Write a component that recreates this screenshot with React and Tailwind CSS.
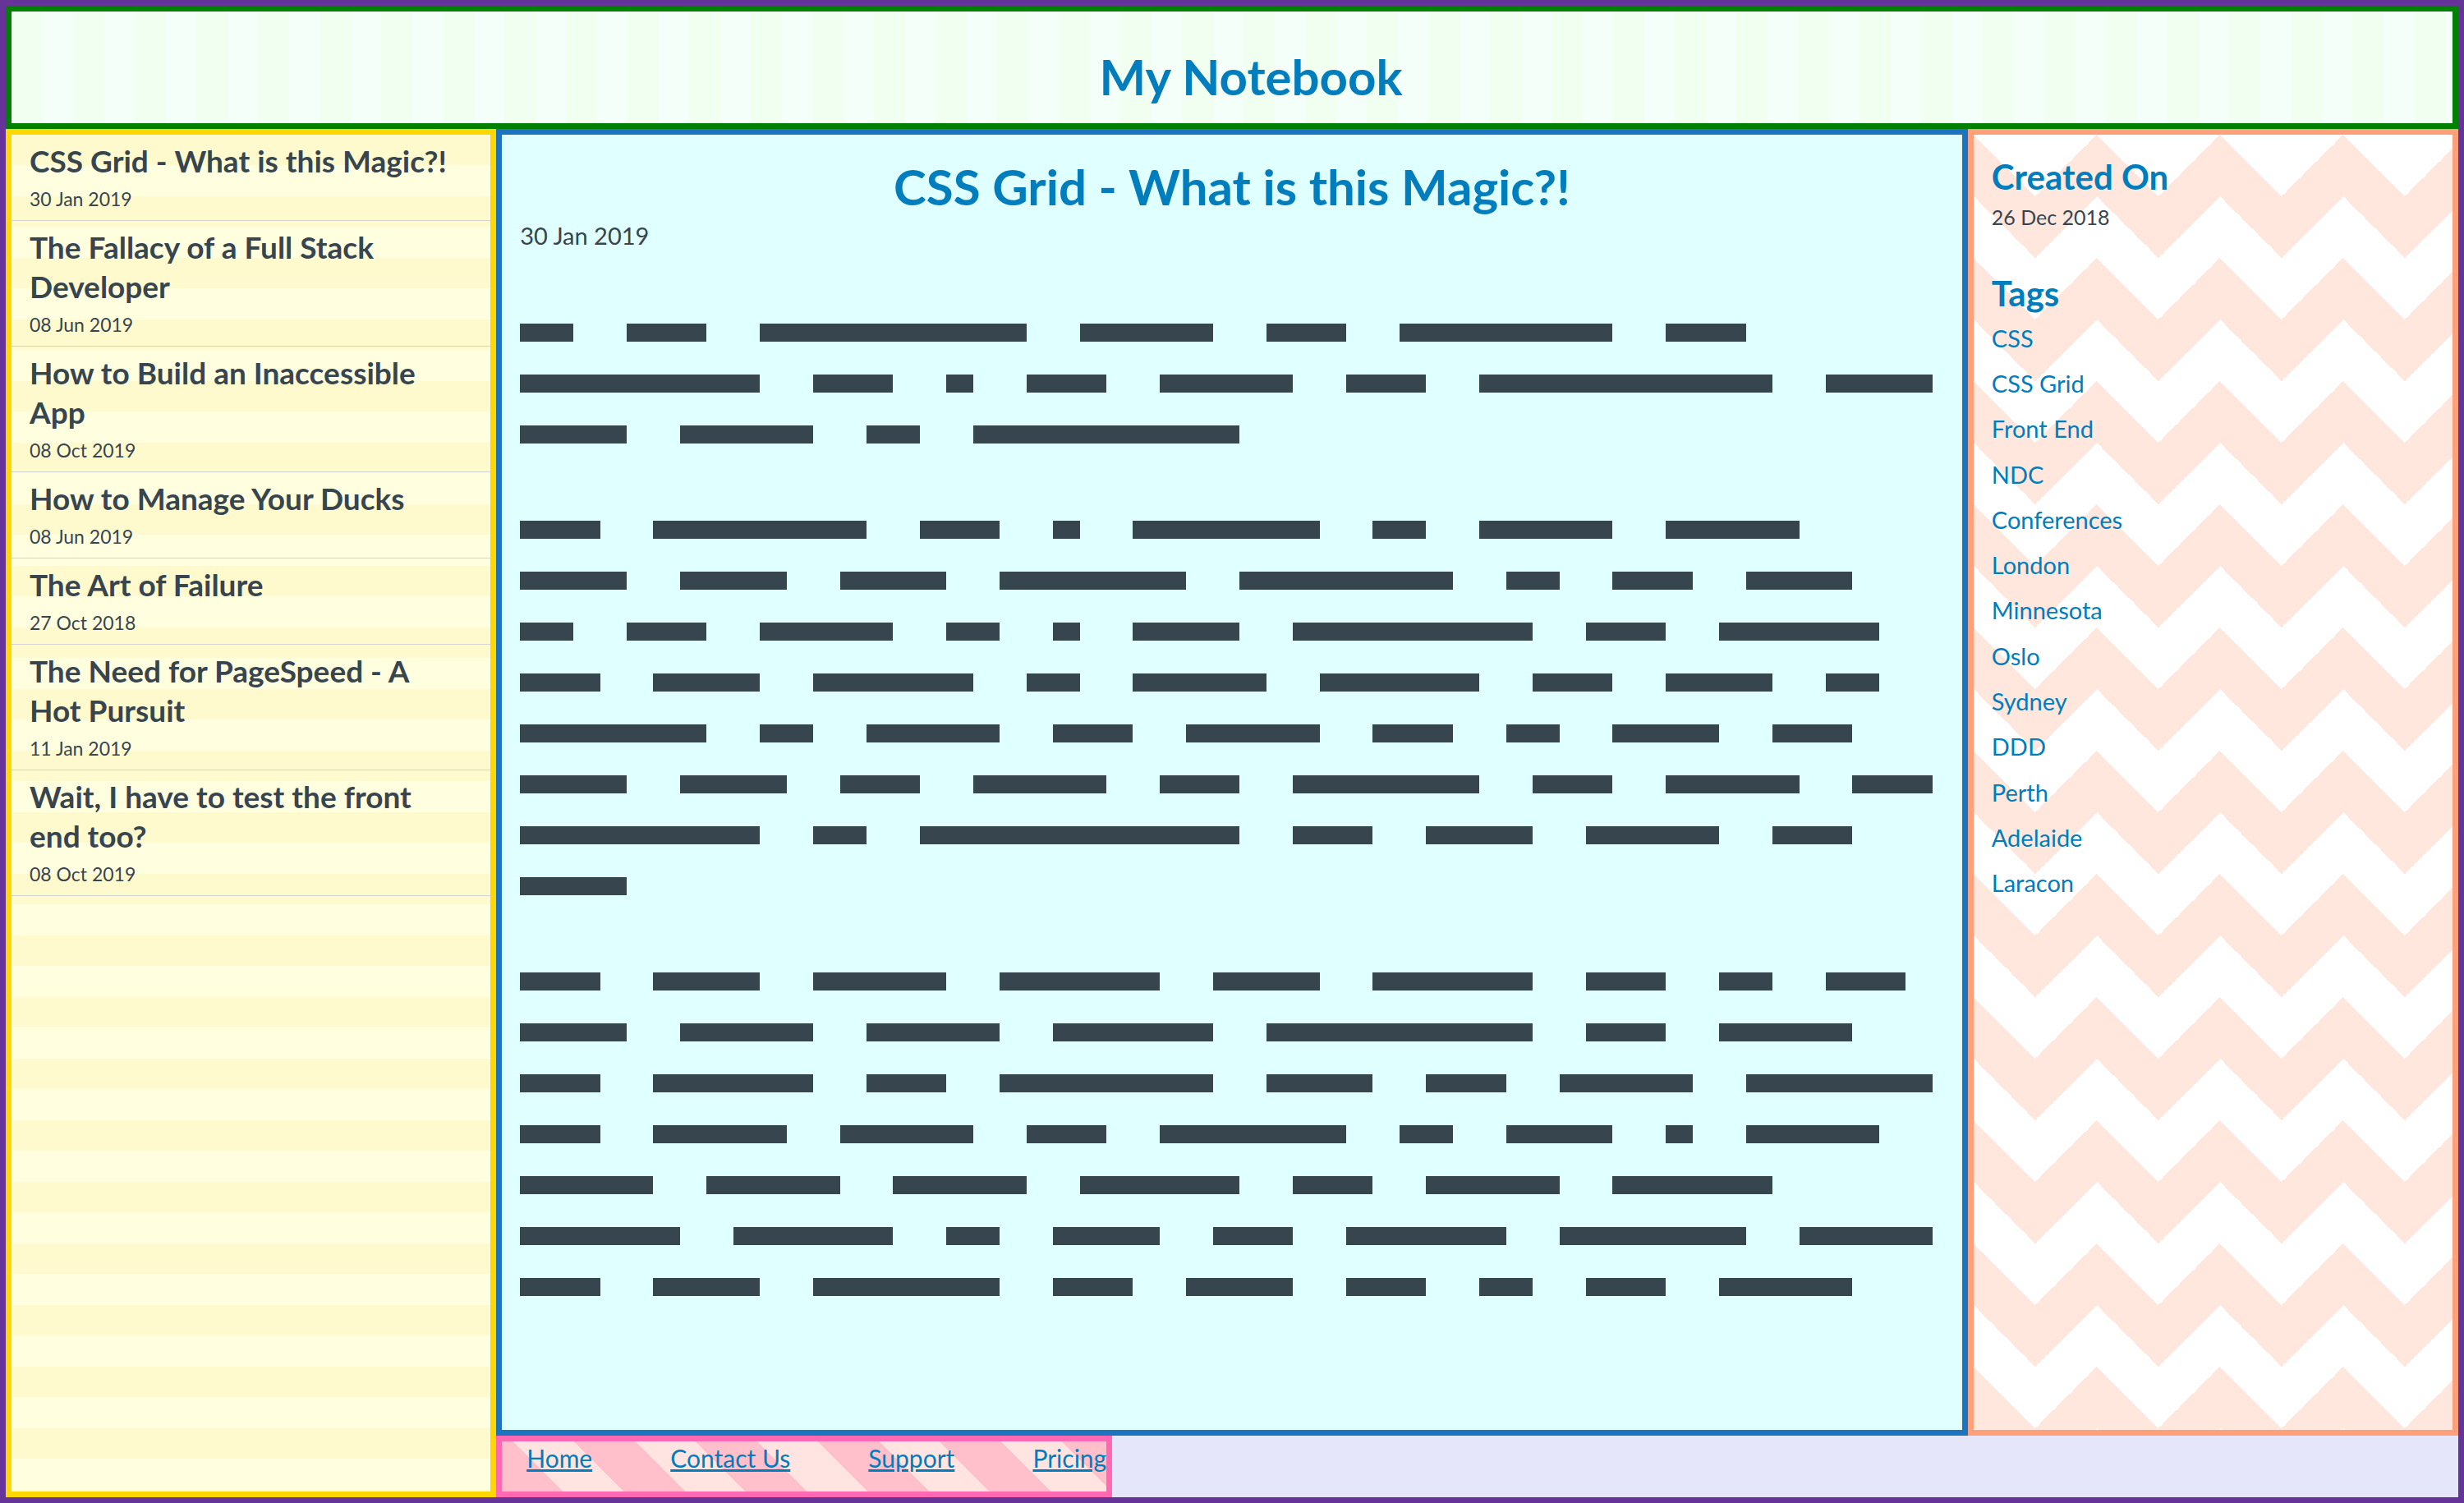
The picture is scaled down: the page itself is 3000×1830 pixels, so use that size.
const notes = [
  { title: "CSS Grid - What is this Magic?!", date: "30 Jan 2019" },
  { title: "The Fallacy of a Full Stack Developer", date: "08 Jun 2019" },
  { title: "How to Build an Inaccessible App", date: "08 Oct 2019" },
  { title: "How to Manage Your Ducks", date: "08 Jun 2019" },
  { title: "The Art of Failure", date: "27 Oct 2018" },
  { title: "The Need for PageSpeed - A Hot Pursuit", date: "11 Jan 2019" },
  { title: "Wait, I have to test the front end too?", date: "08 Oct 2019" },
];

const tags = [
  "CSS", "CSS Grid", "Front End", "NDC", "Conferences", "London", "Minnesota",
  "Oslo", "Sydney", "DDD", "Perth", "Adelaide", "Laracon",
];

const links = ["Home", "Contact Us", "Support", "Pricing"];

// Word lengths of the placeholder text: paragraphs > lines > words.
const paragraphs = [
  [
    [2, 3, 10, 5, 3, 8, 3],
    [9, 3, 1, 3, 5, 3, 11, 4],
    [4, 5, 2, 10],
  ],
  [
    [3, 8, 3, 1, 7, 2, 5, 5],
    [4, 4, 4, 7, 8, 2, 3, 4],
    [2, 3, 5, 2, 1, 4, 9, 3, 6],
    [3, 4, 6, 2, 5, 6, 3, 4, 2],
    [7, 2, 5, 3, 5, 3, 2, 4, 3],
    [4, 4, 3, 5, 3, 7, 3, 5, 3],
    [9, 2, 12, 3, 4, 5, 3],
    [4],
  ],
  [
    [3, 4, 5, 6, 4, 6, 3, 2, 3],
    [4, 5, 5, 6, 10, 3, 5],
    [3, 6, 3, 8, 4, 3, 5, 7],
    [3, 5, 5, 3, 7, 2, 4, 1, 5],
    [5, 5, 5, 6, 3, 5, 6],
    [6, 6, 2, 4, 3, 6, 7, 5],
    [3, 4, 7, 3, 4, 3, 2, 3, 5],
  ],
];

const WORD_SPACE = 2;

function Line({ words }) {
  let column = 1;
  return (
    <div className="grid grid-cols-[repeat(53,minmax(0,1fr))]">
      {words.map((length, i) => {
        const start = column;
        column += length + WORD_SPACE;
        return (
          <span
            key={i}
            className="h-[22px] bg-[#37454f]"
            style={{ gridColumn: `${start} / span ${length}` }}
          />
        );
      })}
    </div>
  );
}

function Header() {
  return (
    <header className="col-span-3 flex items-center justify-center border-[7px] border-[#008000] bg-[repeating-linear-gradient(90deg,#f0fff0_0_38px,#f5fffa_38px_75px)] pt-[22px] pl-[46px]">
      <h1 className="text-[60px] leading-[82px] font-bold text-[#007dbc]">My Notebook</h1>
    </header>
  );
}

function NoteList() {
  return (
    <nav
      aria-label="Notes"
      className="row-span-2 border-[7px] border-[#ffd700] bg-[repeating-linear-gradient(180deg,#fffacd_0_37px,#ffffe0_37px_75px)]"
    >
      <ul>
        {notes.map((note) => (
          <li key={note.title} className="border-b border-[#d3d3d3] pt-2 pr-12 pb-[10px] pl-[22px]">
            <h2 className="text-[37px] leading-[48px] font-bold">{note.title}</h2>
            <p className="mt-1.5 text-[23px] leading-[32px]">{note.date}</p>
          </li>
        ))}
      </ul>
    </nav>
  );
}

function Article() {
  return (
    <main className="border-[7px] border-[#1e73be] bg-[#e0ffff] px-[22px] pt-[22px]">
      <h2 className="text-center text-[60px] leading-[82px] font-bold text-[#007dbc]">
        CSS Grid - What is this Magic?!
      </h2>
      <p className="text-[29px] leading-[38px]">30 Jan 2019</p>
      <div className="mt-[88px] flex flex-col gap-[94px] pr-[14px]">
        {paragraphs.map((lines, i) => (
          <div key={i} className="flex flex-col gap-[40px]">
            {lines.map((words, j) => (
              <Line key={j} words={words} />
            ))}
          </div>
        ))}
      </div>
    </main>
  );
}

function Details() {
  return (
    <aside className="border-[7px] border-[#ffa07a] bg-white bg-[linear-gradient(135deg,#ffe7de_25%,transparent_25%),linear-gradient(225deg,#ffe7de_25%,transparent_25%),linear-gradient(315deg,#ffe7de_25%,transparent_25%),linear-gradient(45deg,#ffe7de_25%,transparent_25%)] bg-size-[150px_150px] bg-position-[75px_75px,75px_75px,0_75px,0_75px] px-[22px] pt-[28px]">
      <h3 className="text-[42px] leading-[46px] font-bold text-[#007dbc]">Created On</h3>
      <p className="text-[25px] leading-[52px]">26 Dec 2018</p>
      <h3 className="mt-[44px] text-[42px] leading-[46px] font-bold text-[#007dbc]">Tags</h3>
      <ul className="mt-1 grid h-[719px] auto-rows-fr items-center text-[29px] leading-[38px] text-[#007dbc]">
        {tags.map((tag) => (
          <li key={tag}>
            <a href="#">{tag}</a>
          </li>
        ))}
      </ul>
    </aside>
  );
}

function Footer() {
  return (
    <footer className="col-start-2 w-[750px] border-[7px] border-[#ff69b4] bg-[repeating-linear-gradient(45deg,#ffc0cb_0_53px,#ffe4e1_53px_105px)] pl-[30px]">
      <nav aria-label="Footer" className="flex justify-between text-[30px] leading-[40px] text-[#007dbc]">
        {links.map((link) => (
          <a key={link} href="#" className="underline">
            {link}
          </a>
        ))}
      </nav>
    </footer>
  );
}

export default function App() {
  return (
    <div className="grid min-h-screen grid-cols-[1fr_3fr_1fr] grid-rows-[150px_1fr_75px] border-[7px] border-[#663399] bg-[#e6e6fa] font-[Lato,sans-serif] text-[#37454f]">
      <Header />
      <NoteList />
      <Article />
      <Details />
      <Footer />
    </div>
  );
}
